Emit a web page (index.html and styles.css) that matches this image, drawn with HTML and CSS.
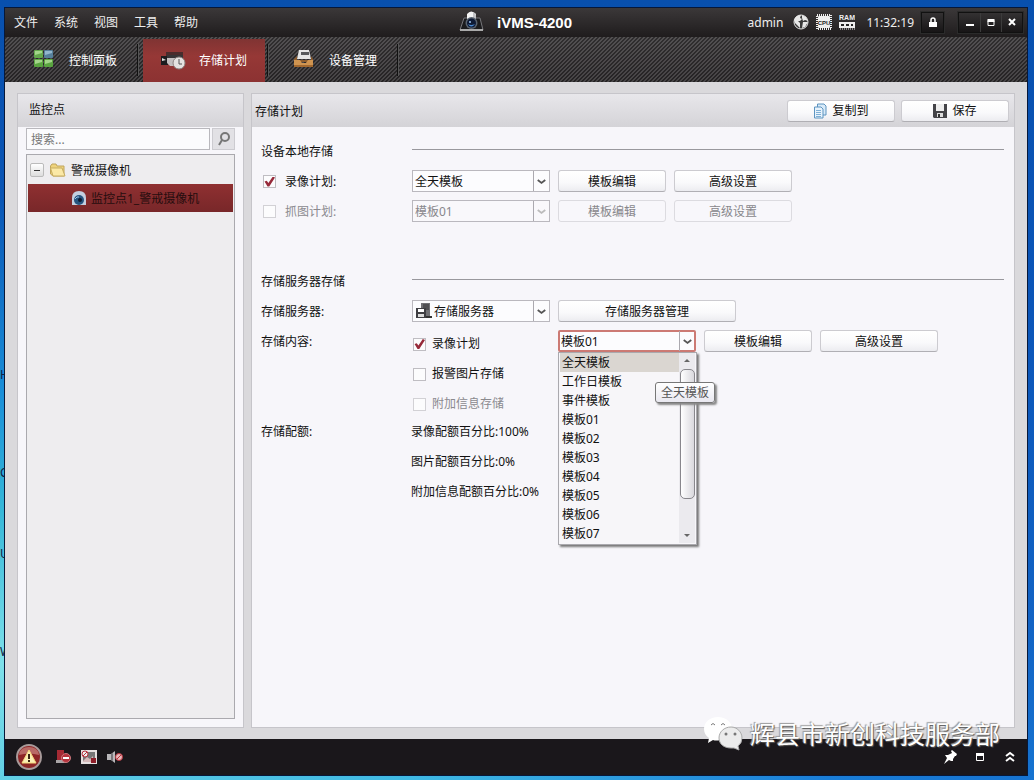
FILE: index.html
```html
<!DOCTYPE html>
<html lang="zh-CN">
<head>
  <meta charset="UTF-8">
  <meta name="viewport" content="width=device-width, initial-scale=1.0">
  <title>iVMS-4200</title>
  <link rel="stylesheet" href="styles.css">
</head>
<body>
  <div class="desktop-labels" aria-hidden="true">
    <span class="label-h">H</span>
    <span class="label-c">C</span>
    <span class="label-u">U</span>
    <span class="label-w">W</span>
  </div>

  <div class="window">
    <header class="titlebar">
      <nav class="menu">
        <a href="#">文件</a>
        <a href="#">系统</a>
        <a href="#">视图</a>
        <a href="#">工具</a>
        <a href="#">帮助</a>
      </nav>
      <div class="brand">
        <svg width="26" height="22" viewBox="0 0 26 22">
          <path d="M5 8 H21 L24 20 H1 Z" fill="#1b1b1d" stroke="#77777b"/>
          <path d="M1 20 H24" stroke="#aaa" stroke-width="2"/>
          <path d="M8 4 Q12 -1 17 4 V12 H8 Z" fill="#f4f4f4"/>
          <path d="M14 2 Q17 3 17 6 V12 H14 Z" fill="#c4c4c7"/>
          <circle cx="12.500" cy="13" r="6" fill="#59626e"/>
          <circle cx="12.500" cy="13" r="4.500" fill="#0e1a35"/>
          <path d="M9 14 Q12 19 16 14 Q12 16 9 14" fill="#4a8ad2"/>
          <circle cx="11" cy="12" r="1" fill="#9cc4f0"/>
        </svg>
        <h1>iVMS-4200</h1>
      </div>
      <div class="status">
        <span>admin</span>
        <div class="status-icons">
          <svg width="16" height="16" viewBox="0 0 16 16">
            <circle cx="8" cy="8" r="7" fill="#3a3a3a" stroke="#e8e8e8"/>
            <path d="M1 6 Q3 1 8 1 L7 4 L9 5 L7 7 L5 7 L7 9 L7 14 L4 11 L2 9 Z" fill="#e8e8e8"/>
            <path d="M9 1 L13 3 L15 7 L12 6 L10 7 L9 4 Z M10 8 L15 8 L12 13 L9 14 Z" fill="#e8e8e8"/>
          </svg>
          <svg width="16" height="16" viewBox="0 0 16 16">
            <rect x="1" y="1" width="14" height="14" fill="none" stroke="#eee" stroke-width="2" stroke-dasharray="1 1"/>
            <rect x="2" y="2" width="12" height="12" rx="1" fill="#eee"/>
            <text x="8" y="11" class="chip-text">CPU</text>
          </svg>
          <svg width="16" height="16" viewBox="0 0 16 16">
            <text x="8" y="6" class="ram-text">RAM</text>
            <path d="M0 8 H16 V14 H0 Z" fill="#eee"/>
            <path d="M2 10 H5 V12 H2 Z M7 10 H10 V12 H7 Z M12 10 H14 V12 H12 Z" fill="#222"/>
            <path d="M1 15 H16" stroke="#eee" stroke-dasharray="1 1"/>
          </svg>
        </div>
        <time>11:32:19</time>
        <div class="win-buttons">
          <button type="button" aria-label="锁定">
            <svg width="10" height="12" viewBox="0 0 10 12"><path d="M3 5 V3 Q3 1 5 1 Q7 1 7 3 V5" fill="none" stroke="#fff" stroke-width="1.500"/><rect x="1" y="5" width="8" height="5" fill="#fff"/></svg>
          </button>
        </div>
        <div class="win-buttons">
          <button type="button" aria-label="最小化">
            <svg width="10" height="10" viewBox="0 0 10 10"><path d="M1 7 H9" stroke="#fff" stroke-width="2"/></svg>
          </button>
          <button type="button" aria-label="最大化">
            <svg width="10" height="10" viewBox="0 0 10 10"><path d="M2 2.500 H8 V7.500 H2 Z" fill="none" stroke="#fff"/><path d="M1.500 2.500 H8.500" stroke="#fff" stroke-width="3"/></svg>
          </button>
          <button type="button" aria-label="关闭">
            <svg width="10" height="10" viewBox="0 0 10 10"><path d="M2 1 L8 7 M8 1 L2 7" stroke="#fff" stroke-width="2"/></svg>
          </button>
        </div>
      </div>
    </header>

    <ul class="tabs">
      <li>
        <button type="button">
          <svg width="26" height="24" viewBox="0 0 26 24">
            <rect x="3" y="1" width="9" height="8" rx="1" fill="#63a84c"/>
            <rect x="13" y="1" width="9" height="8" rx="1" fill="#56809c"/>
            <rect x="3" y="10" width="9" height="8" rx="1" fill="#5aa540"/>
            <rect x="13" y="10" width="9" height="8" rx="1" fill="#5aa540"/>
            <path d="M4 2 H11 V4 L4 6 Z M4 11 H11 V13 L4 15 Z M14 11 H21 V13 L14 15 Z" fill="#a3d58a"/>
            <path d="M14 2 H21 V4 L14 6 Z" fill="#93b7cd"/>
          </svg>
          控制面板
        </button>
      </li>
      <li class="active">
        <button type="button">
          <svg width="26" height="24" viewBox="0 0 26 24">
            <path d="M5 3 H22 V7 H5 Z" fill="#4a2c2c"/>
            <path d="M0 7 H7 V16 H0 Z" fill="#1c1c1e"/>
            <path d="M6 6 H22 V12 L17 17 H9 L6 14 Z" fill="#c4c0c0"/>
            <path d="M6 6 H22 V9 H6 Z" fill="#373436"/>
            <path d="M1 9 L5 11 L1 12 Z" fill="#ddd"/>
            <circle cx="18" cy="14" r="6" fill="#e5e3e1" stroke="#8d8583"/>
            <path d="M18 10 V15 H21" fill="none" stroke="#555"/>
          </svg>
          存储计划
        </button>
      </li>
      <li>
        <button type="button">
          <svg width="26" height="24" viewBox="0 0 26 24">
            <path d="M8 1 H18 L20 10 H6 Z" fill="#e6e6e6"/>
            <path d="M10 3 H18 V6 H10 Z" fill="#58595c"/>
            <path d="M3 10 L6 7 V11 H20 V7 L22 10 V13 H3 Z" fill="#8c5c2d"/>
            <path d="M3 11 H9 L11 14 H15 L17 11 H22 V17 Q22 18 21 18 H4 Q3 18 3 17 Z" fill="#cf9450"/>
            <path d="M3 16 H22 V18 H3 Z" fill="#a3692f"/>
          </svg>
          设备管理
        </button>
      </li>
    </ul>

    <main class="workspace">
      <aside class="panel sidebar">
        <h2 class="panel-head">监控点</h2>
        <form class="search">
          <input type="text" placeholder="搜索..." aria-label="搜索">
          <button type="button" aria-label="搜索">
            <svg width="16" height="16" viewBox="0 0 16 16"><circle cx="9" cy="6" r="4" fill="none" stroke="#777" stroke-width="2"/><path d="M6 9 L3 14" stroke="#777" stroke-width="2"/></svg>
          </button>
        </form>
        <div class="tree">
          <div class="tree-row">
            <button type="button" class="toggle" aria-label="折叠"></button>
            <svg width="18" height="14" viewBox="0 0 18 14">
              <path d="M1.500 3 V11 L4 13 H15 V3 H8 L7 1 H3 Z" fill="#eed37c" stroke="#c0a55c"/>
              <path d="M1.500 5 H13 L16 13 H4 Z" fill="#fbe9a6" stroke="#c7ad62"/>
            </svg>
            <span>警戒摄像机</span>
          </div>
          <div class="tree-row tree-child selected">
            <svg width="16" height="16" viewBox="0 0 16 16">
              <path d="M1 15 V8 Q1 1 8 1 Q15 1 15 8 V15 Z" fill="#c3cfe0"/>
              <circle cx="8" cy="10" r="5" fill="#26547f"/>
              <circle cx="9" cy="10" r="2" fill="#0d1b33"/>
              <path d="M4 9 Q6 6 8 7" fill="none" stroke="#9cc5ea"/>
            </svg>
            <span>监控点1_警戒摄像机</span>
          </div>
        </div>
      </aside>

      <section class="panel content">
        <div class="panel-head content-head">
          <h2>存储计划</h2>
          <button type="button" class="btn">
            <svg width="14" height="16" viewBox="0 0 14 16">
              <path d="M4.500 1 H11 L13 3 V12 H4.500 Z" fill="#d8eaf8" stroke="#5d94c0"/>
              <path d="M1.500 4 H8 L10 6 V15 H1.500 Z" fill="#e8f3fc" stroke="#5d94c0"/>
              <path d="M3 7.500 H8 M3 9.500 H8 M3 11.500 H8 M3 13.500 H8" stroke="#7fb0d6"/>
            </svg>
            复制到
          </button>
          <button type="button" class="btn">
            <svg width="14" height="14" viewBox="0 0 14 14">
              <path d="M0 0 H14 V14 H1 L0 13 Z" fill="#444448"/>
              <rect x="3" y="0" width="8" height="7" fill="#eee"/>
              <rect x="4" y="9" width="6" height="4" fill="#ddd"/>
              <rect x="5" y="10" width="2" height="3" fill="#333"/>
            </svg>
            保存
          </button>
        </div>

        <form class="settings">
          <fieldset>
            <div class="row">
              <h3>设备本地存储</h3>
              <hr>
            </div>
            <div class="row">
              <label class="check"><input type="checkbox" checked>录像计划:</label>
              <div class="controls">
                <div class="combo">
                  <select aria-label="录像计划模板"><option>全天模板</option></select>
                  <svg class="arrow" width="16" height="20" viewBox="0 0 16 20"><path d="M4 9 L8 12 L12 9" /></svg>
                </div>
                <button type="button" class="btn">模板编辑</button>
                <button type="button" class="btn btn-wide">高级设置</button>
              </div>
            </div>
            <div class="row">
              <label class="check off"><input type="checkbox" disabled>抓图计划:</label>
              <div class="controls">
                <div class="combo">
                  <select aria-label="抓图计划模板" disabled><option>模板01</option></select>
                  <svg class="arrow" width="16" height="20" viewBox="0 0 16 20"><path d="M4 9 L8 12 L12 9" /></svg>
                </div>
                <button type="button" class="btn" disabled>模板编辑</button>
                <button type="button" class="btn btn-wide" disabled>高级设置</button>
              </div>
            </div>
          </fieldset>

          <fieldset>
            <div class="row">
              <h3>存储服务器存储</h3>
              <hr>
            </div>
            <div class="row">
              <label for="server">存储服务器:</label>
              <div class="controls">
                <div class="combo with-icon">
                  <select id="server"><option>存储服务器</option></select>
                  <svg class="combo-icon" width="16" height="16" viewBox="0 0 16 16">
                    <path d="M5 0 H14 V14 H5 Z" fill="#707074"/>
                    <path d="M7 2 H13 M7 4 H13 M7 6 H13" stroke="#2e2e30"/>
                    <path d="M9 14 H16" stroke="#333" stroke-width="2"/>
                    <path d="M0 5 H10 V15 H0 Z" fill="#3e3e42"/>
                    <rect x="2" y="6" width="6" height="3" fill="#fff"/>
                    <rect x="2" y="11" width="6" height="3" fill="#ddd"/>
                  </svg>
                  <svg class="arrow" width="16" height="20" viewBox="0 0 16 20"><path d="M4 9 L8 12 L12 9" /></svg>
                </div>
                <button type="button" class="btn btn-manage">存储服务器管理</button>
              </div>
            </div>
            <div class="row row-top">
              <span>存储内容:</span>
              <div class="controls">
                <div class="checks">
                  <label class="check"><input type="checkbox" checked>录像计划</label>
                  <label class="check"><input type="checkbox">报警图片存储</label>
                  <label class="check off"><input type="checkbox" disabled>附加信息存储</label>
                </div>
                <div class="combo open">
                  <select aria-label="录像计划模板"><option>模板01</option></select>
                  <svg class="arrow" width="16" height="20" viewBox="0 0 16 20"><path d="M4 9 L8 12 L12 9" /></svg>
                  <div class="dropdown">
                    <ul role="listbox">
                      <li role="option" class="hover">全天模板</li>
                      <li role="option">工作日模板</li>
                      <li role="option">事件模板</li>
                      <li role="option">模板01</li>
                      <li role="option">模板02</li>
                      <li role="option">模板03</li>
                      <li role="option">模板04</li>
                      <li role="option">模板05</li>
                      <li role="option">模板06</li>
                      <li role="option">模板07</li>
                    </ul>
                    <div class="scrollbar">
                      <i class="up"></i>
                      <div class="thumb"></div>
                      <i class="down"></i>
                    </div>
                  </div>
                  <div class="tooltip" role="tooltip">全天模板</div>
                </div>
                <button type="button" class="btn">模板编辑</button>
                <button type="button" class="btn btn-wide">高级设置</button>
              </div>
            </div>
            <div class="row row-top">
              <span>存储配额:</span>
              <div class="quota">
                <p>录像配额百分比:100%</p>
                <p>图片配额百分比:0%</p>
                <p>附加信息配额百分比:0%</p>
              </div>
            </div>
          </fieldset>
        </form>
      </section>
    </main>

    <footer class="statusbar">
      <button type="button" aria-label="报警">
        <svg width="28" height="28" viewBox="0 0 28 28">
          <circle cx="14" cy="14" r="12" fill="#8d2526" stroke="#a89a9a" stroke-width="2"/>
          <path d="M4 12 Q5 4 14 4 Q23 4 24 12 Q14 9 4 12" fill="#b96a66"/>
          <path d="M14 7 L21 20 H7 Z" fill="#fbeeb4" stroke="#f3d67a" stroke-linejoin="round"/>
          <path d="M14 11 V16 M14 17 V19" stroke="#3a2513" stroke-width="2"/>
        </svg>
      </button>
      <button type="button" aria-label="清除报警">
        <svg width="16" height="16" viewBox="0 0 16 16">
          <path d="M2 1 H9 V11 H2 Z" fill="#a52a34"/>
          <path d="M1 11 H11 V14 H1 Z" fill="#a9a4a6"/>
          <circle cx="11" cy="9" r="4.500" fill="#b5323c" stroke="#c9787d"/>
          <path d="M8 9 H14" stroke="#fff" stroke-width="2"/>
        </svg>
      </button>
      <button type="button" aria-label="禁用弹图">
        <svg width="16" height="16" viewBox="0 0 16 16">
          <rect x="1" y="2" width="14" height="12" fill="#777" stroke="#e6e0e0" stroke-width="2"/>
          <path d="M2 12 L6 8 L9 10 L12 7 V13 H2 Z" fill="#d5b9ba"/>
          <rect x="10" y="9" width="5" height="5" fill="#8e1f2a"/>
          <circle cx="4" cy="5" r="3" fill="#eee" stroke="#b5323c"/>
          <path d="M2 7 L6 3" stroke="#b5323c"/>
        </svg>
      </button>
      <button type="button" aria-label="静音">
        <svg width="16" height="16" viewBox="0 0 16 16">
          <path d="M0 5 H4 L8 2 V14 L4 11 H0 Z" fill="#b9b7ba"/>
          <path d="M4 5 L6 4 V12 L4 11 Z" fill="#77757a"/>
          <circle cx="12" cy="8" r="3.500" fill="#e9b8bb" stroke="#b5323c"/>
          <path d="M10 10 L14 6" stroke="#b5323c"/>
        </svg>
      </button>
      <div class="statusbar-right">
        <button type="button" aria-label="固定">
          <svg width="14" height="14" viewBox="0 0 14 14"><path d="M8 1 L9 0 L14 4 L13 6 L12 6 L10 9 L10 11 L8 11 L6 10 L1 14 L4 8 L2 5 L5 5 L9 3 Z" fill="#fff"/></svg>
        </button>
        <button type="button" aria-label="窗口">
          <svg width="14" height="14" viewBox="0 0 14 14"><path d="M3.500 4 V10.500 H10.500 V4" fill="none" stroke="#fff"/><path d="M3 4.500 H11" stroke="#fff" stroke-width="3"/></svg>
        </button>
        <button type="button" aria-label="展开">
          <svg width="14" height="14" viewBox="0 0 14 14"><path d="M3 6 L7 3 L11 6 M3 11 L7 8 L11 11" fill="none" stroke="#fff" stroke-width="2"/></svg>
        </button>
      </div>
    </footer>
  </div>

  <div class="watermark">
    <svg width="40" height="36" viewBox="0 0 40 36">
      <path d="M15 1 C7 1 1 6 1 13 C1 17 3 20 6 22 L5 27 L10 24 Q13 25 17 24 C24 23 29 19 29 13 C29 6 23 1 15 1 Z" fill="#fff"/>
      <path d="M8 9 Q10 6 12 9 M18 9 Q20 6 22 9" fill="none" stroke="#777"/>
      <path d="M28 11 C21 11 16 16 16 22 C16 28 21 32 28 32 L31 32 L36 34 L35 30 Q39 27 39 22 C39 16 34 11 28 11 Z" fill="#ececec" stroke="#aaa"/>
      <circle cx="23" cy="18" r="1.500" fill="#777"/>
      <circle cx="32" cy="18" r="1.500" fill="#777"/>
    </svg>
    <span>辉县市新创科技服务部</span>
  </div>
</body>
</html>
```
FILE: styles.css
```css
* { box-sizing: border-box; }
body {
  margin: 0;
  height: 100vh;
  min-height: 600px;
  padding: 8px 7px 5px 5px;
  display: flex;
  position: relative;
  overflow: hidden;
  font: 12px/18px "Noto Sans", "Noto Sans CJK SC", sans-serif;
  color: #111;
  background:
    linear-gradient(90deg, #62cfe4, #3fb9e4 40%, #1a7ed8 80%, #1673d0) bottom / 100% 5px no-repeat,
    linear-gradient(#0850ae, #0b55b8 40%, #1263c4 80%, #1673d0) right / 50% 100% no-repeat,
    linear-gradient(#0850ae, #0a55b5 25%, #1a8ed8 50%, #35b6d8 65%, #7ee0ea 85%, #62cfe4) left / 50% 100% no-repeat,
    linear-gradient(#0850ae, #0850ae);
}
h1, h2, h3, p, ul, fieldset { margin: 0; padding: 0; border: 0; font: inherit; list-style: none; }
button, input, select { font: inherit; color: inherit; margin: 0; padding: 0; }
button { cursor: pointer; }
svg { display: block; flex: none; }
.desktop-labels span { position: absolute; left: 0; color: #124; font-size: 12px; }
.label-h { top: 366px; }
.label-c { top: 464px; }
.label-u { top: 545px; }
.label-w { top: 643px; }

.window {
  flex: 1;
  display: flex;
  flex-direction: column;
  position: relative;
  min-width: 0;
  background: #dad9dc;
  box-shadow: 0 0 0 1px #06183a;
}

/* title bar */
.titlebar {
  display: grid;
  grid-template-columns: 1fr auto 1fr;
  align-items: center;
  height: 29px;
  padding: 0 4px 0 9px;
  color: #eee;
  background: linear-gradient(#3b3839, #1f1c1d);
}
.menu { display: flex; gap: 16px; }
.menu a { color: inherit; text-decoration: none; }
.brand { display: flex; align-items: center; gap: 12px; margin-right: 6px; }
.brand svg { margin-bottom: 4px; }
.brand h1 { font: bold 15px/20px "Liberation Sans", Arial, sans-serif; color: #fff; }
.status { display: flex; align-items: center; justify-content: flex-end; }
.status-icons { display: flex; gap: 7px; margin: 0 11px 2px 10px; }
.chip-text { font: bold 6px "Liberation Sans", sans-serif; fill: #222; text-anchor: middle; }
.ram-text { font: bold 7px "Liberation Sans", sans-serif; fill: #eee; text-anchor: middle; }
.win-buttons { display: flex; margin-left: 14px; border: 1px solid #111; box-shadow: 0 0 0 1px #2b2b2b; }
time + .win-buttons { margin-left: 7px; }
.win-buttons button {
  display: grid;
  place-items: center;
  width: 21px;
  height: 19px;
  border: 0;
  background: linear-gradient(#343233, #171516);
}
.win-buttons button + button { border-left: 1px solid #3c3c3c; }

/* tabs */
.tabs {
  display: flex;
  height: 45px;
  padding-left: 4px;
  background:
    linear-gradient(135deg, rgba(0,0,0,.3) 25%, rgba(130,130,130,.22) 25% 50%, rgba(0,0,0,.3) 50% 75%, rgba(130,130,130,.22) 75%) 0 0 / 4px 4px,
    linear-gradient(#454244, #353234);
}
.tabs li { display: flex; align-items: center; width: 130px; padding-left: 4px; }
.tabs li::after { content: ""; width: 1px; height: 32px; background: #111; border-right: 1px solid #555; box-sizing: content-box; }
.tabs button {
  display: flex;
  align-items: center;
  align-self: flex-end;
  gap: 12px;
  flex: 1;
  height: 43px;
  margin-right: 2px;
  padding-left: 18px;
  border: 0;
  color: #fff;
  background: none;
}
.tabs .active button { background: linear-gradient(#803433, #963836 40%, #8c3232); }

/* panels */
.workspace { flex: 1; display: flex; gap: 7px; min-height: 0; padding: 11px 12px; }
.panel { border: 1px solid #c6c5ca; background: #f7f6fa; }
.panel-head {
  height: 33px;
  padding: 6px 11px;
  line-height: 20px;
  background: linear-gradient(#e8e7eb, #d4d3d7);
}
.sidebar { display: flex; flex-direction: column; width: 227px; flex: none; padding-bottom: 8px; }
.search { display: flex; gap: 2px; padding: 1px 8px 0; }
.search input { flex: 1; min-width: 0; height: 22px; padding: 0 4px; border: 1px solid #b9b8bd; background: #fbfbfd; }
.search input::placeholder { color: #777; opacity: 1; }
.search button { display: grid; place-items: center; width: 23px; border: 1px solid #cccbd0; background: #e2e1e5; }
.tree { flex: 1; margin: 4px 8px 0; padding: 1px; border: 1px solid #aaa9ae; background: #eeedef; }
.tree-row { display: flex; align-items: center; gap: 4px; height: 28px; padding-left: 2px; }
.tree-row span { padding-top: 2px; }
.toggle {
  display: grid;
  place-items: center;
  width: 14px;
  height: 14px;
  margin-right: 1px;
  border: 1px solid #bbb;
  border-radius: 2px;
  background: linear-gradient(#fff, #ddd);
}
.toggle::before { content: ""; width: 6px; height: 1px; background: #333; }
.tree-child { padding-left: 43px; }
.selected { background: linear-gradient(#8f3031, #782729); color: #260d0e; }

.content { flex: 1; min-width: 0; }
.content-head { display: flex; align-items: center; gap: 6px; padding: 0 5px 0 3px; }
.content-head h2 { flex: 1; padding-top: 3px; }
.settings { padding: 9px 10px 0 9px; }
fieldset { min-width: 0; }
fieldset + fieldset { margin-top: 40px; }
.row { display: grid; grid-template-columns: 151px 1fr; align-items: center; min-height: 30px; }
.row h3, .row > label { padding-top: 1px; }
.row hr { width: 100%; margin: 0 0 4px; border: 0; border-top: 1px solid #99989d; }
.row-top { align-items: start; line-height: 32px; }
.controls { display: flex; gap: 8px; line-height: 18px; }
.row-top .controls { padding-top: 4px; }
.off { color: #8b8a8f; }
.check { display: flex; align-items: center; gap: 7px; padding-left: 1px; }
.check input {
  appearance: none;
  display: grid;
  place-items: center;
  width: 13px;
  height: 13px;
  margin: 0 2px 0 1px;
  border: 1px solid #bfbdc2;
  background: #fcfcfd;
}
.check input:disabled { border-color: #d2d1d5; }
.check input:checked::before {
  content: "";
  width: 11px;
  height: 10px;
  background: #962a3a;
  clip-path: polygon(5% 50%, 25% 42%, 40% 65%, 80% 0, 100% 10%, 48% 100%, 32% 100%);
}
.checks { display: grid; grid-auto-rows: 30px; width: 138px; height: 86px; padding-top: 3px; }
.checks .check { gap: 4px; padding-left: 0; height: 22px; }

.btn {
  display: flex;
  align-items: center;
  justify-content: center;
  gap: 5px;
  width: 108px;
  height: 22px;
  padding-top: 1px;
  border: 1px solid #cccbd0;
  border-bottom-color: #b0afb4;
  border-radius: 3px;
  background: linear-gradient(#fff, #f9f9fb 60%, #ececf0);
}
.btn:disabled { color: #88878c; border-color: #dcdbe0; background: #f8f7fb; }
.btn-wide { width: 118px; }
.btn-manage { width: 178px; }

.combo { display: grid; position: relative; width: 138px; height: 22px; }
.combo select {
  grid-area: 1 / 1;
  appearance: none;
  width: 100%;
  height: 22px;
  padding: 1px 18px 0 2px;
  border: 1px solid #bab8be;
  border-radius: 0;
  background: #fcfcfe;
}
.combo select:disabled { color: #88878c; background: #f9f8fb; opacity: 1; }
.arrow {
  grid-area: 1 / 1;
  z-index: 1;
  justify-self: end;
  align-self: center;
  margin-right: 1px;
  border-left: 1px solid #aba9af;
  fill: none;
  stroke: #555;
  stroke-width: 2;
  pointer-events: none;
}
select:disabled ~ .arrow { stroke: #bbb; }
.with-icon select { padding-left: 21px; }
.combo-icon { grid-area: 1 / 1; z-index: 1; align-self: center; margin-left: 4px; pointer-events: none; }
.open select { border: 2px solid #cc7a74; border-radius: 2px; padding-left: 1px; }

/* opened template list */
.dropdown {
  position: absolute;
  z-index: 5;
  top: 22px;
  left: 0;
  display: flex;
  width: 139px;
  padding: 0 1px 1px;
  border: 1px solid #aaa9ae;
  background: #f7f6f9;
  box-shadow: 2px 2px 2px #777;
}
.dropdown ul { flex: 1; }
.dropdown li { height: 19px; padding-left: 2px; line-height: 20px; }
.dropdown .hover { background: #dad6d1; }
.scrollbar { display: flex; flex-direction: column; align-items: center; width: 16px; background: #ebeaee; }
.up, .down { width: 0; height: 0; margin: 6px 0; border: 3px solid transparent; }
.up { border-top: 0; border-bottom-color: #666; }
.down { border-bottom: 0; border-top-color: #666; margin-top: auto; }
.thumb { width: 15px; height: 130px; margin-top: 1px; border: 1px solid #88878c; border-radius: 5px; background: linear-gradient(90deg, #fff, #d9d8dd); }
.tooltip {
  position: absolute;
  z-index: 6;
  top: 52px;
  left: 97px;
  height: 21px;
  padding: 0 5px;
  border: 1px solid #777;
  border-radius: 3px;
  line-height: 20px;
  white-space: nowrap;
  color: #555;
  background: linear-gradient(#fff, #e9e8f0);
  box-shadow: 2px 2px 2px #888;
}
.quota { margin-left: -1px; }
.quota p { height: 30px; }

/* bottom bar */
.statusbar { display: flex; align-items: center; gap: 10px; height: 36px; padding: 0 10px; background: #1a171b; }
.statusbar button { display: grid; place-items: center; padding: 0; border: 0; background: none; }
.statusbar button:first-child { margin-right: 2px; }
.statusbar-right { display: flex; gap: 16px; margin-left: auto; }
.statusbar-right button:first-child { margin-right: 0; }
.watermark {
  position: absolute;
  right: 34px;
  bottom: 28px;
  z-index: 10;
  display: flex;
  align-items: center;
  gap: 7px;
  font-size: 25px;
  line-height: 36px;
  color: #fff;
  text-shadow: 1px 1px 1px #555, -1px -1px 1px #999;
  pointer-events: none;
}
```
